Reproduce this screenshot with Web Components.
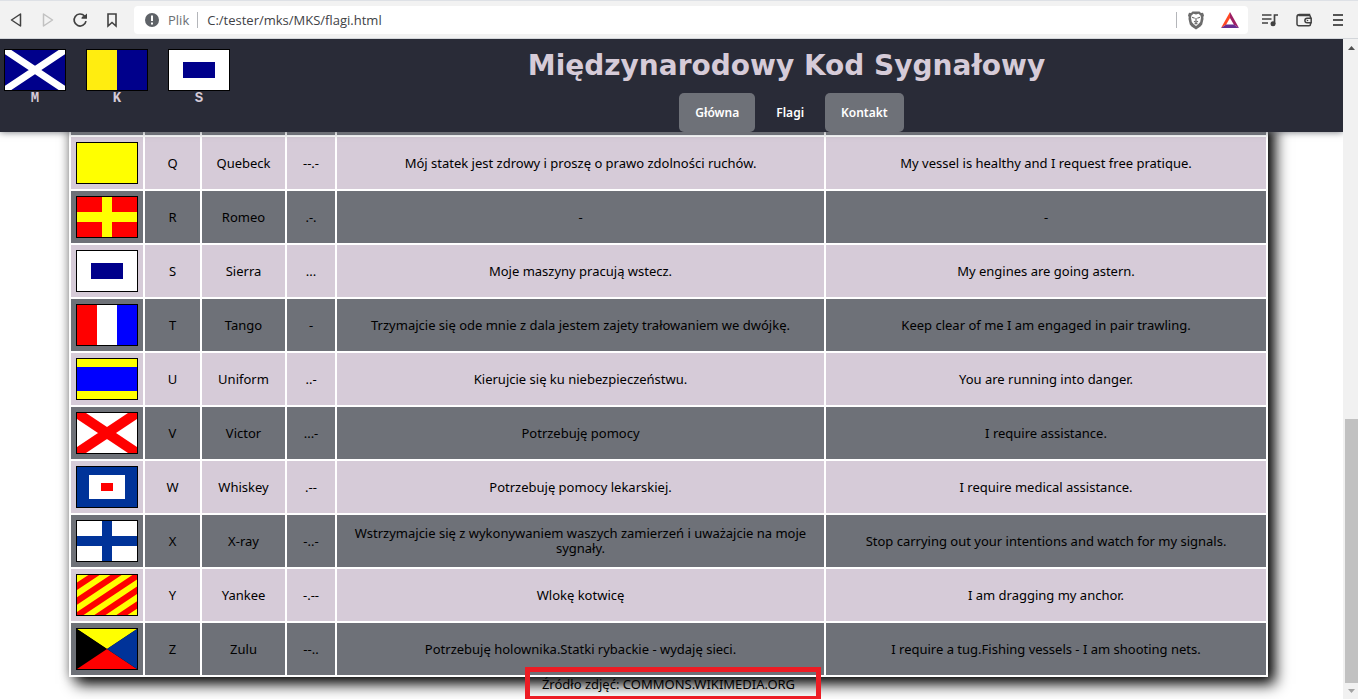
<!DOCTYPE html>
<html lang="pl">
<head>
<meta charset="utf-8">
<title>Międzynarodowy Kod Sygnałowy</title>
<style>
  body { margin: 0; font-family: "Noto Sans", Tahoma, sans-serif; font-size: 13px; line-height: 15px; color: #000; background: #fff; }
</style>
</head>
<body>
<browser-window>
  <browser-toolbar slot="toolbar"></browser-toolbar>
  <site-header slot="header" heading="Międzynarodowy Kod Sygnałowy"></site-header>
  <signal-table></signal-table>
  <source-note>Źródło zdjęć: COMMONS.WIKIMEDIA.ORG</source-note>
</browser-window>

<script>
const define = (name, html, setup) => customElements.define(name, class extends HTMLElement {
  connectedCallback() {
    if (this.shadowRoot) return;
    const root = this.attachShadow({ mode: 'open' });
    const template = document.createElement('template');
    template.innerHTML = html;
    root.append(template.content.cloneNode(true));
    if (setup) setup(this, root);
  }
});

/* Flag drawings on a 60 x 40 field */
const FLAGS = {
  M: '<path fill="#00008b" d="M0 0h60v40H0z"/><path stroke="#fff" stroke-width="7" d="M-3-2 63 42M63-2-3 42"/>',
  K: '<path fill="#00008b" d="M0 0h60v40H0z"/><path fill="#ffed10" d="M0 0h30v40H0z"/>',
  Q: '<path fill="#ff0" d="M0 0h60v40H0z"/>',
  R: '<path fill="#f00" d="M0 0h60v40H0z"/><path fill="#ff0" d="M25 0h10v40H25zM0 15h60v10H0z"/>',
  S: '<path fill="#fff" d="M0 0h60v40H0z"/><path fill="#00008b" d="M14 12h32v16H14z"/>',
  T: '<path fill="#fff" d="M0 0h60v40H0z"/><path fill="#f00" d="M0 0h20v40H0z"/><path fill="#00f" d="M40 0h20v40H40z"/>',
  U: '<path fill="#ff0" d="M0 0h60v40H0z"/><path fill="#00f" d="M0 8h60v24H0z"/>',
  V: '<path fill="#fff" d="M0 0h60v40H0z"/><path stroke="#f00" stroke-width="10" d="M-3-2 63 42M63-2-3 42"/>',
  W: '<path fill="#039" d="M0 0h60v40H0z"/><path fill="#fff" d="M12 8h36v24H12z"/><path fill="#f00" d="M24 16h12v8H24z"/>',
  X: '<path fill="#fff" d="M0 0h60v40H0z"/><path fill="#039" d="M25 0h10v40H25zM0 15h60v10H0z"/>',
  Y: '<path fill="#ff0" d="M0 0h60v40H0z"/><path stroke="#f00" stroke-width="6.200" d="M47-20-73 60M69-20-51 60M91-20-29 60M113-20-7 60M135-20 15 60"/>',
  Z: '<path fill="#ff0" d="M0 0h60L30 20z"/><path fill="#000" d="M0 0v40l30-20z"/><path fill="#f00" d="M0 40h60L30 20z"/><path fill="#039" d="M60 0v40L30 20z"/>'
};

define('signal-flag', `
<style>
  :host { display: block; width: 60px; height: 40px; border: 1px solid #000; background: #000; }
  svg { display: block; width: 100%; height: 100%; }
</style>
<svg viewBox="0 0 60 40" aria-hidden="true"></svg>`, (host, root) => {
  root.querySelector('svg').innerHTML = FLAGS[host.getAttribute('letter')] || '';
});

define('browser-window', `
<style>
  :host { display: grid; grid-template-rows: auto minmax(0, 1fr); height: 100vh; }
  .view { display: grid; grid-template-columns: minmax(0, 1fr) 15px; min-height: 0; }
  .page { display: flex; flex-direction: column; min-height: 0; overflow: hidden; background: #fff; }
  .content { flex: 1; min-height: 0; overflow: hidden; display: flex; flex-direction: column; justify-content: flex-end; padding: 0 75px 0 69px; }
  ::slotted([slot=header]) { z-index: 1; }
</style>
<slot name="toolbar"></slot>
<div class="view">
  <div class="page">
    <slot name="header"></slot>
    <div class="content"><slot></slot></div>
  </div>
  <page-scrollbar></page-scrollbar>
</div>`);

define('page-scrollbar', `
<style>
  :host { display: grid; grid-template-rows: 17px 363fr 264fr 16px; background: #f1f1f1; }
  svg { display: block; width: 15px; height: 16px; }
  .thumb { margin-left: 2px; background: #c1c1c1; }
</style>
<svg viewBox="0 0 15 16"><path fill="#505050" d="M5 11h7L8.500 7z"/></svg>
<div></div>
<div class="thumb"></div>
<svg viewBox="0 0 15 16"><path fill="#a3a3a3" d="M5 6h7L8.500 10z"/></svg>`);

define('browser-toolbar', `
<style>
  :host { display: flex; align-items: center; box-sizing: border-box; height: 39px; border-top: 1px solid #dee1e6; border-bottom: 1px solid #d3d6da; background: #f2f2f2; padding: 0 8px 0 4px; font: 13px/20px "Open Sans", "Segoe UI", sans-serif; }
  button { display: block; border: 0; padding: 0; margin: 0 8px 0 0; background: none; width: 24px; height: 24px; }
  svg { display: block; width: 24px; height: 24px; fill: none; stroke: #414141; stroke-width: 2; }
  .field { flex: 1; display: flex; align-items: center; height: 28px; border-radius: 4px; background: #fff; margin: 0 10px 0 2px; padding: 0 6px; }
  .field button { margin: 0; }
  .field button + button { margin-left: 10px; }
  label { color: #6b6f74; padding: 0 8px 0 4px; }
  .rule { width: 1px; height: 16px; background: #b4b6ba; }
  input { flex: 1; min-width: 0; border: 0; padding: 0; margin: 0 8px 0 9px; outline: 0; background: none; font: inherit; color: #404246; }
  .rule + button { margin-left: 7px !important; }
  button.wide { margin-right: 10px; }
  button:last-child { margin-right: 0; }
</style>
<button aria-label="Wstecz"><svg viewBox="0 0 24 24"><path stroke-width="1.500" stroke-linejoin="round" d="M16.500 6v12L7.500 12z"/></svg></button>
<button aria-label="Dalej"><svg viewBox="0 0 24 24"><path stroke="#c1c1c1" stroke-width="1.500" stroke-linejoin="round" d="M7.500 6v12l9-6z"/></svg></button>
<button aria-label="Odśwież"><svg viewBox="0 0 24 24"><path stroke-width="1.700" d="M16.600 8A6 6 0 1 0 18 13.200"/><path fill="#414141" stroke="none" d="M19 5.500v5.200h-5.500c0-1.800 1-2.600 2.500-2.600z"/></svg></button>
<button aria-label="Zakładka"><svg viewBox="0 0 24 24"><path stroke-width="1.600" d="M8 6h8v12l-4-3.500L8 18z"/></svg></button>
<div class="field">
  <svg viewBox="0 0 24 24"><circle cx="12" cy="12" r="7" fill="#5f6368" stroke="none"/><path stroke="#fff" d="M12 7.500v5.500M12 14.500v2"/></svg>
  <label for="address">Plik</label>
  <span class="rule"></span>
  <input id="address" value="C:/tester/mks/MKS/flagi.html">
  <span class="rule"></span>
  <button aria-label="Tarcze"><svg viewBox="0 0 24 24"><path fill="#6c6c6c" stroke="none" d="M8.500 3.500h7l1.500 1.500 2-.3 1 2.800-.7 1.500.2 2-1.300 5.500-1.700 2-4.500 3-4.500-3-1.700-2L4.500 11l.2-2L4 7.500l1-2.800 2 .3z"/><path fill="#fff" stroke="none" d="M9.500 5.800 12 6.500l2.500-.7L16.500 7.500l.5 2.200-.8 4.300-2.200 2.600L12 18l-2-1.400L7.800 14 7 9.700l.5-2.200z"/><path stroke="#6c6c6c" stroke-width="1.200" d="M8 9.200l2.700 1M16 9.200l-2.700 1M12 10v3.500M10 13.200l2 1.200 2-1.200M10.500 16l1.500-.6 1.500.6"/></svg></button>
  <button aria-label="Nagrody"><svg viewBox="0 0 24 24"><path fill="#ff4724" stroke="none" d="M12 4 3 20l5.200-3.500L12 10z"/><path fill="#9e1f63" stroke="none" d="M12 4l9 16-5.200-3.500L12 10z"/><path fill="#662d91" stroke="none" d="M3 20h18l-5.200-3.500H8.200z"/></svg></button>
</div>
<button class="wide" aria-label="Lista odtwarzania"><svg viewBox="0 0 24 24"><path stroke-width="1.700" d="M4 7h9.500M4 11h9.500M4 15h6M16.500 16V7H20"/><circle cx="15" cy="15.800" r="2.500" fill="#414141" stroke="none"/></svg></button>
<button class="wide" aria-label="Portfel"><svg viewBox="0 0 24 24"><path stroke-width="1.500" d="M18.500 10V9a1.500 1.500 0 0 0-1.500-1.500H6.500M17.500 7V6.500h-10a2.500 2.500 0 0 0-2.500 2.500v7a1.800 1.800 0 0 0 1.800 1.800H17a1.500 1.500 0 0 0 1.500-1.500v-1M19.200 10.200h-4a2.300 2.300 0 0 0 0 4.600h4z"/><circle cx="15.500" cy="12.500" r=".8" fill="#414141" stroke="none"/></svg></button>
<button aria-label="Menu"><svg viewBox="0 0 24 24"><path stroke="#555" d="M7 7h10M7 12h10M7 17h10"/></svg></button>`);

define('site-header', `
<style>
  :host { display: flex; flex: none; position: relative; height: 93px; background: #292b37; color: #d6cbd8; box-shadow: 0 0 7px #6e7178; }
  .badges { display: flex; gap: 20px; padding: 10px 0 0 4px; width: 226px; }
  figure { margin: 0; }
  figcaption { text-align: center; font: bold 14px/15px "Liberation Mono", "Courier New", monospace; }
  .main { flex: 1; display: flex; flex-direction: column; align-items: center; justify-content: space-between; }
  h1 { margin: 8px 0 0; font: bold 28px/38px "DejaVu Sans", Verdana, sans-serif; }
  nav { display: flex; gap: 5px; padding-left: 10px; }
  a { box-sizing: border-box; height: 39px; padding: 0 16px; border-radius: 5px; font-weight: 600; font-size: 12px; line-height: 39px; color: #fff; text-decoration: none; background: #6e7178; }
  a[aria-current] { background: none; }
</style>
<div class="badges">
  <figure><signal-flag letter="M"></signal-flag><figcaption>M</figcaption></figure>
  <figure><signal-flag letter="K"></signal-flag><figcaption>K</figcaption></figure>
  <figure><signal-flag letter="S"></signal-flag><figcaption>S</figcaption></figure>
</div>
<div class="main">
  <h1></h1>
  <nav><a href="#glowna">Główna</a><a href="#flagi" aria-current="page">Flagi</a><a href="#kontakt">Kontakt</a></nav>
</div>`, (host, root) => {
  root.querySelector('h1').textContent = host.getAttribute('heading');
});

const ROWS = [
  ['Q', 'Quebeck', '--.-', 'Mój statek jest zdrowy i proszę o prawo zdolności ruchów.', 'My vessel is healthy and I request free pratique.'],
  ['R', 'Romeo', '.-.', '-', '-'],
  ['S', 'Sierra', '...', 'Moje maszyny pracują wstecz.', 'My engines are going astern.'],
  ['T', 'Tango', '-', 'Trzymajcie się ode mnie z dala jestem zajety trałowaniem we dwójkę.', 'Keep clear of me I am engaged in pair trawling.'],
  ['U', 'Uniform', '..-', 'Kierujcie się ku niebezpieczeństwu.', 'You are running into danger.'],
  ['V', 'Victor', '...-', 'Potrzebuję pomocy', 'I require assistance.'],
  ['W', 'Whiskey', '.--', 'Potrzebuję pomocy lekarskiej.', 'I require medical assistance.'],
  ['X', 'X-ray', '-..-', 'Wstrzymajcie się z wykonywaniem waszych zamierzeń i uważajcie na moje sygnały.', 'Stop carrying out your intentions and watch for my signals.'],
  ['Y', 'Yankee', '-.--', 'Wlokę kotwicę', 'I am dragging my anchor.'],
  ['Z', 'Zulu', '--..', 'Potrzebuję holownika.Statki rybackie - wydaję sieci.', 'I require a tug.Fishing vessels - I am shooting nets.']
];

define('signal-table', `
<style>
  :host { display: block; flex: none; }
  table { width: 100%; table-layout: fixed; border-collapse: separate; border-spacing: 2px; background: #fff; box-shadow: 7px 7px 14px #000, 0 0 10px #b4b4b4; }
  td { box-sizing: border-box; height: 52px; padding: 5px; text-align: center; vertical-align: middle; background: #d6cbd8; }
  td:nth-child(4) ~ td { padding: 5px 14px; }
  tr:nth-child(odd) td { background: #6e7178; }
  .flag { width: 72px; } .letter { width: 55px; } .name { width: 83px; } .morse { width: 48px; } .polish { width: 41.1%; }
</style>
<table>
  <colgroup><col class="flag"><col class="letter"><col class="name"><col class="morse"><col class="polish"><col></colgroup>
  <tbody><tr><td></td><td></td><td></td><td></td><td></td><td></td></tr></tbody>
</table>`, (host, root) => {
  const body = root.querySelector('tbody');
  for (const row of ROWS) {
    const tr = body.insertRow();
    const flag = document.createElement('signal-flag');
    flag.setAttribute('letter', row[0]);
    tr.insertCell().append(flag);
    for (const text of row) tr.insertCell().textContent = text;
  }
});

define('source-note', `
<style>
  :host { display: block; flex: none; position: relative; height: 22px; text-align: center; line-height: 15px; }
  .mark { position: absolute; top: -10px; left: 50%; width: 296px; height: 34px; margin-left: -144px; box-sizing: border-box; border: 5px solid #ed1c24; }
</style>
<slot></slot><div class="mark"></div>`);
</script>
</body>
</html>
